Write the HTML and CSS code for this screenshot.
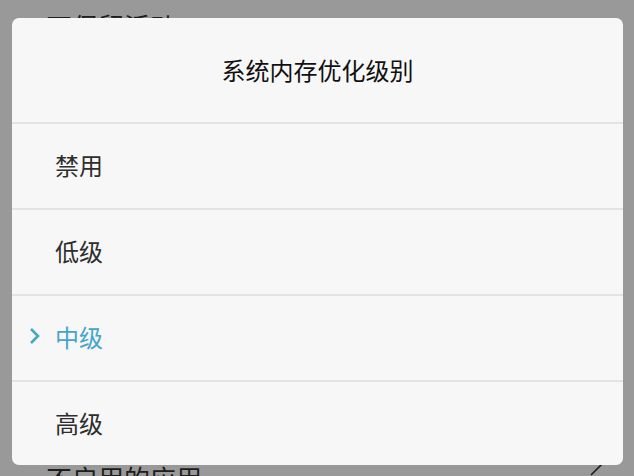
FILE: index.html
```html
<!DOCTYPE html>
<html lang="zh-CN">
  <head>
    <meta charset="UTF-8" />
    <meta name="viewport" content="width=device-width, initial-scale=1.0" />
    <title>系统内存优化级别</title>
    <link rel="stylesheet" href="styles.css">
  </head>
  <body>
    <!-- settings list behind the dialog -->
    <ul class="settings">
      <li class="settings-row">不保留活动</li>
      <li class="settings-row settings-row-last">
        <span>不启用的应用</span>
        <svg class="settings-arrow" width="14" height="26" viewBox="0 0 14 26">
          <polyline points="1,1 13,13 1,25" fill="none" stroke="#333" stroke-width="1.6" />
        </svg>
      </li>
    </ul>

    <div class="scrim"></div>

    <div class="dialog">
      <h2 class="dialog-title">系统内存优化级别</h2>
      <ul class="options">
        <li class="option"><span class="mark"></span>禁用</li>
        <li class="option"><span class="mark"></span>低级</li>
        <li class="option option-active">
          <span class="mark">
            <svg width="12" height="18" viewBox="0 0 12 18">
              <polyline points="2,2 9,9 2,16" fill="none" stroke="#45a5cc" stroke-width="2.6" />
            </svg>
          </span>中级
        </li>
        <li class="option"><span class="mark"></span>高级</li>
      </ul>
    </div>
  </body>
</html>
```

FILE: styles.css
```css
html,
body {
  margin: 0;
  height: 100%;
  overflow: hidden;
}
body {
  position: relative;
  background-color: #fff;
  font-family: "Noto Sans CJK SC", "Noto Sans", sans-serif;
  color: #333;
}
ul {
  margin: 0;
  padding: 0;
  list-style: none;
}

.settings {
  padding-top: 1px;
}
.settings-row {
  display: flex;
  align-items: center;
  justify-content: space-between;
  height: 60px;
  margin-top: -6px;
  padding: 0 30px 0 46px;
  font-size: 26px;
}
.settings-row-last {
  margin-top: 392px;
}
.settings-arrow {
  align-self: flex-start;
  margin-top: 3px;
}

.scrim {
  position: absolute;
  inset: 0;
  background-color: rgba(0, 0, 0, 0.4);
}

.dialog {
  position: absolute;
  left: 12px;
  top: 18px;
  width: 611px;
  height: 447px;
  background-color: #f7f7f7;
  border-radius: 7px;
  overflow: hidden;
}
.dialog-title {
  display: flex;
  align-items: center;
  justify-content: center;
  height: 102px;
  margin: 0;
  padding-bottom: 2px;
  font-size: 24px;
  font-weight: normal;
  color: #111;
}
.option {
  display: flex;
  align-items: center;
  height: 80px;
  padding: 0 0 4px 17px;
  border-top: 2px solid #e3e3e3;
  font-size: 24px;
  color: #2e2e2e;
}
.mark {
  display: flex;
  align-items: center;
  width: 12px;
  margin-right: 14px;
}
.option-active {
  color: #45a5cc;
}
```
